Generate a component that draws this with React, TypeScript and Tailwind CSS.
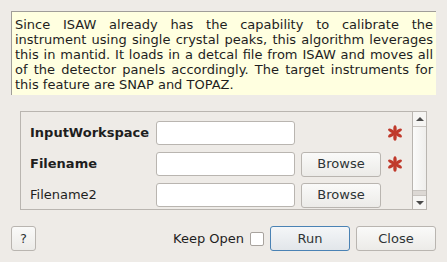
import React from 'react';

const font = "font-['DejaVu_Sans',sans-serif]";

// six rounded petals, like the Qt "required" marker
const Asterisk: React.FC = () => (
  <svg width="16" height="16" viewBox="0 0 16 16" className="shrink-0">
    <g fill="#c0392b" transform="translate(8 8)">
      {[0, 60, 120, 180, 240, 300].map((a) => (
        <ellipse key={a} cx="0" cy="-4.3" rx="1.7" ry="3.5" transform={`rotate(${a})`} />
      ))}
      <circle cx="0" cy="0" r="1.3" />
    </g>
  </svg>
);

const Button: React.FC<{ label: string; className?: string; primary?: boolean }> = ({
  label,
  className = '',
  primary,
}) => (
  <button
    className={`h-[25px] shrink-0 rounded-[3px] border bg-gradient-to-b text-[13px] text-[#2e3436] ${
      primary
        ? 'border-[#4a82b4] from-[#f4f6f8] to-[#e2e6ea]'
        : 'border-[#b9b5b0] from-[#fafaf9] to-[#ecebe8]'
    } ${className}`}
  >
    {label}
  </button>
);

const Row: React.FC<{ label: string; bold?: boolean; browse?: boolean; required?: boolean }> = ({
  label,
  bold,
  browse,
  required,
}) => (
  <div className="flex h-[24px] shrink-0 items-center gap-[6px]">
    <div className={`w-[120px] shrink-0 whitespace-nowrap text-[13px] text-[#1e1e1e] ${bold ? 'font-bold' : ''}`}>
      {label}
    </div>
    <div className="h-[24px] w-[139px] shrink-0 rounded-[3px] border border-[#b9b5b0] bg-white" />
    {browse ? <Button label="Browse" className="w-[80px]" /> : <div className="w-[80px] shrink-0" />}
    {required && <Asterisk />}
  </div>
);

export default function App() {
  return (
    <div className={`flex h-[262px] w-[447px] flex-col bg-[#eeebe7] p-[11px] ${font}`}>
      <div className="h-[84px] shrink-0 border-l border-t border-[#a09d99] bg-[#ffffe0] pl-[3px] pr-[3px] pt-[5px]">
        <p className="text-justify text-[13px] leading-[15px] text-[#1e1e1e]">
          Since ISAW already has the capability to calibrate the instrument using single crystal peaks, this
          algorithm leverages this in mantid. It loads in a detcal file from ISAW and moves all of the detector
          panels accordingly. The target instruments for this feature are SNAP and TOPAZ.
        </p>
      </div>

      <div className="mx-[9px] mt-[16px] flex h-[99px] shrink-0 border border-[#b9b5b0]">
        <div className="flex flex-1 flex-col gap-[7px] overflow-hidden pl-[9px] pt-[9px]">
          <Row label="InputWorkspace" bold required />
          <Row label="Filename" bold browse required />
          <Row label="Filename2" browse />
        </div>
        <div className="flex w-[14px] flex-col border-l border-[#b9b5b0]">
          <div className="flex h-[15px] items-center justify-center border-b border-[#c8c4c0] bg-[#f6f5f3]">
            <div className="h-0 w-0 border-x-[4px] border-b-[4px] border-x-transparent border-b-[#4a4a4a]" />
          </div>
          <div className="h-[64px] border-b border-[#c8c4c0] bg-gradient-to-r from-[#fbfbfa] to-[#efeeec]" />
          <div className="h-[4px] bg-[#dcd8d4]" />
          <div className="flex flex-1 items-center justify-center border-t border-[#c8c4c0] bg-[#f6f5f3]">
            <div className="h-0 w-0 border-x-[4px] border-t-[4px] border-x-transparent border-t-[#4a4a4a]" />
          </div>
        </div>
      </div>

      <div className="mt-[16px] flex items-center">
        <Button label="?" className="w-[25px]" />
        <div className="flex-1" />
        <span className="text-[13px] text-[#1e1e1e]">Keep Open</span>
        <div className="ml-[6px] h-[14px] w-[14px] rounded-[2px] border border-[#a8a39e] bg-white" />
        <Button label="Run" primary className="ml-[6px] w-[80px]" />
        <Button label="Close" className="ml-[6px] w-[80px]" />
      </div>
    </div>
  );
}
